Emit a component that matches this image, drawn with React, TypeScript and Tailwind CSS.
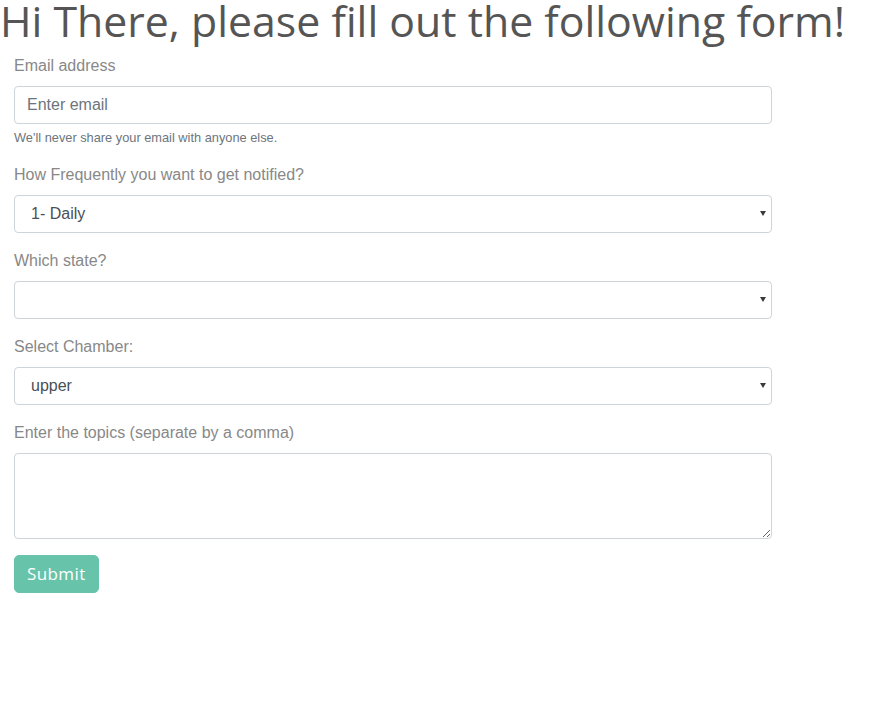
import React from "react";

function Arrow() {
  return (
    <svg
      className="pointer-events-none absolute right-[6px] top-[16px]"
      width="6"
      height="5"
      viewBox="0 0 6 5"
    >
      <path d="M0 0H6L3 5Z" fill="#3a3a3a" />
    </svg>
  );
}

export default function App() {
  const label = "block mb-2 text-[16px] leading-[24px] text-[#888888]";
  const control =
    "block w-full h-[38px] px-3 py-[6px] text-[16px] leading-[24px] text-[#495057] bg-white border border-[#ced4da] rounded-[4px] outline-none";
  const select = control + " appearance-none pl-[16px]";
  return (
    <div className="min-h-[714px] bg-white" style={{ fontFamily: '"Liberation Sans", Arial, sans-serif' }}>
      <h1
        className="m-0 h-[54px] pt-[1px] text-[42.8px] leading-[40px] font-normal text-[#555555] whitespace-nowrap"
        style={{ fontFamily: '"Open Sans", sans-serif' }}
      >
        Hi There, please fill out the following form!
      </h1>
      <form className="w-[758px] ml-[14px]">
        <div className="mb-4">
          <label className={label}>Email address</label>
          <input type="email" placeholder="Enter email" className={control + " placeholder:text-[#6c757d]"} />
          <small className="block mt-1 text-[12.8px] leading-[19.2px] text-[#6c757d]">
            We'll never share your email with anyone else.
          </small>
        </div>
        <div className="mb-4">
          <label className={label}>How Frequently you want to get notified?</label>
          <div className="relative">
            <select className={select} defaultValue="1">
              <option value="1">1- Daily</option>
              <option value="2">2- Weekly</option>
            </select>
            <Arrow />
          </div>
        </div>
        <div className="mb-4">
          <label className={label}>Which state?</label>
          <div className="relative">
            <select className={select} defaultValue="">
              <option value=""></option>
            </select>
            <Arrow />
          </div>
        </div>
        <div className="mb-4">
          <label className={label}>Select Chamber:</label>
          <div className="relative">
            <select className={select} defaultValue="upper">
              <option value="upper">upper</option>
              <option value="lower">lower</option>
            </select>
            <Arrow />
          </div>
        </div>
        <div className="mb-4">
          <label className={label}>Enter the topics (separate by a comma)</label>
          <textarea
            rows={3}
            className="block w-full h-[86px] px-3 py-[6px] text-[16px] leading-[24px] text-[#495057] bg-white border border-[#ced4da] rounded-[4px] outline-none"
          />
        </div>
        <button
          type="button"
          className="h-[38px] px-3 text-[17px] leading-[24px] tracking-[0.4px] text-white bg-[#68c3ab] rounded-[5px] border border-[#68c3ab]"
          style={{ fontFamily: '"Open Sans", sans-serif' }}
        >
          Submit
        </button>
      </form>
    </div>
  );
}
